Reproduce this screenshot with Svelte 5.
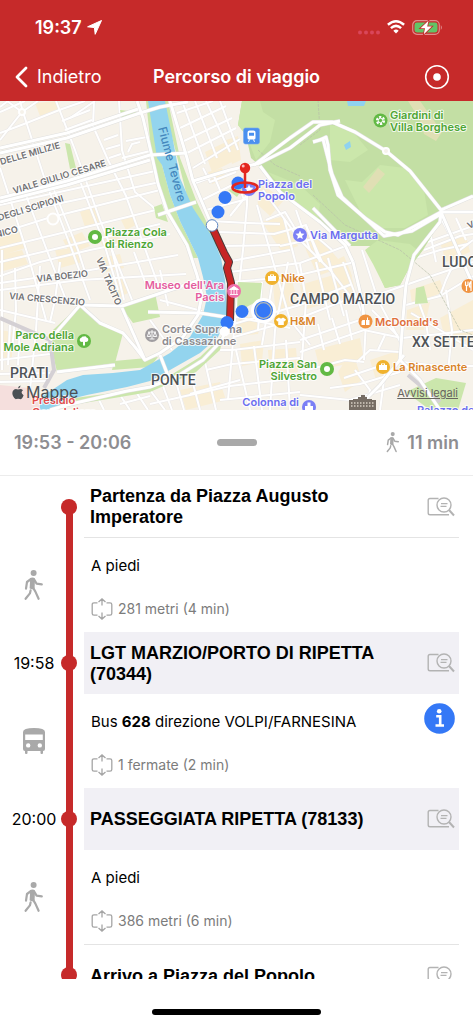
<script>
  const stops = [
    { kind: 'stop', name: 'Partenza da Piazza Augusto Imperatore', time: '', shaded: false },
    { kind: 'leg', mode: 'walk', detail: '281 metri (4 min)' },
    { kind: 'stop', name: 'LGT MARZIO/PORTO DI RIPETTA (70344)', time: '19:58', shaded: true },
    { kind: 'leg', mode: 'bus', line: '628', direction: 'VOLPI/FARNESINA', detail: '1 fermate (2 min)' },
    { kind: 'stop', name: 'PASSEGGIATA RIPETTA (78133)', time: '20:00', shaded: true },
    { kind: 'leg', mode: 'walk', detail: '386 metri (6 min)' },
    { kind: 'stop', name: 'Arrivo a Piazza del Popolo', time: '', shaded: false },
  ];

  // Small streets, drawn below parks and river
  const streets = [
    // Prati, west bank
    'M0 133L24 124L62 109L85 101', 'M0 112L25 101', 'M7 101L22 112L38 101', 'M22 112L0 140',
    'M20 101L23 112L45 180L72 250L90 300', 'M56 101L75 150L100 220L128 290L140 320',
    'M94 101L93 126L108 160L126 196L160 290', 'M119 101L122 150L135 192L152 206L160 215',
    'M0 168L12 205L30 262L46 320', 'M24 190L46 248L68 305', 'M52 185L78 250L86 275',
    'M78 176L104 243L118 290', 'M62 121L90 110', 'M65 130L92 120', 'M104 140L118 135', 'M106 149L120 145', 'M109 158L121 154',
    'M126 141L147 137', 'M128 152L132 144L140 142', 'M122 158L150 151',
    'M0 205L160 170', 'M0 216L160 182', 'M0 233L48 218L160 190', 'M0 248L160 209', 'M0 262L160 224', 'M8 101L0 107',
    'M0 276L40 262L90 250L170 234', 'M0 283L90 270L178 255', 'M0 290L80 280L186 274', 'M0 310L55 323',
    'M2 250L2 370', 'M15 268L16 310L12 350', 'M40 266L36 330L30 390', 'M60 262L55 300L50 322',
    'M95 101L70 118', 'M112 250L124 300', 'M134 252L148 290', 'M0 360L50 354', 'M0 374L52 373', 'M0 382L50 381',
    'M10 325L8 365', 'M20 326L18 365', 'M122 310L170 290L200 284', 'M160 270L168 306', 'M150 320L172 350', 'M160 300L202 311',
    // Tridente, east bank
    'M177 113L213 101', 'M180 128L226 106', 'M184 141L232 118', 'M187 153L236 128', 'M193 168L240 139', 'M182 101L205 164',
    'M195 101L217 158', 'M206 101L230 152', 'M220 101L238 150', 'M203 168L210 182L236 172', 'M196 183L214 176L220 190', 'M202 200L230 186L245 187',
    'M206 210L247 199', 'M210 221L248 223L280 224', 'M218 232L275 234', 'M222 246L280 245', 'M226 262L290 250',
    'M247 185L247 205L243 250L234 330L228 400', 'M257 205L272 258L290 320L310 345', 'M251 190L230 216', 'M236 178L244 200',
    'M263 190L300 240L330 270L353 300', 'M266 220L285 212L302 240', 'M274 234L306 225L320 262', 'M280 246L318 238L332 250',
    'M284 218L300 280', 'M296 210L310 250', 'M306 226L322 262',
    'M230 272L300 263L351 244', 'M232 282L290 277L355 262', 'M230 325L300 305L352 284', 'M232 316L290 328', 'M234 337L300 318L356 296',
    'M262 282L258 330', 'M272 285L262 345', 'M288 262L275 330L270 410', 'M300 264L306 300L302 360', 'M316 262L330 320', 'M328 258L344 316',
    'M343 262L364 318', 'M300 340L366 318', 'M300 352L364 330L402 338', 'M318 324L324 350', 'M332 318L340 344', 'M346 310L352 340',
    'M362 250L378 300L402 345', 'M374 296L420 280L473 262', 'M372 310L398 336', 'M406 305L440 296L473 276', 'M411 313L440 330L473 350',
    'M418 300L426 322L430 350', 'M446 290L452 330L448 372', 'M402 338L440 334L473 330', 'M402 362L440 366L473 366', 'M400 352L370 350L357 362',
    'M378 350L385 335', 'M355 370L370 390L366 410', 'M344 378L380 366', 'M330 388L360 384L400 372', 'M300 372L345 360L364 362', 'M300 395L350 400L400 385',
    'M366 320L364 360', 'M385 372L380 410', 'M440 296L446 280L460 250L473 240', 'M424 250L460 236L473 234', 'M430 232L436 262', 'M442 220L462 258', 'M428 242L473 226',
    'M456 218L466 240', 'M415 258L440 250L468 244',
    // Ponte
    'M150 390L165 410', 'M163 386L172 410', 'M176 382L184 410', 'M190 372L200 410', 'M205 362L216 410', 'M220 350L232 350L300 342',
    'M150 404L230 386L300 378', 'M206 370L232 364L300 358', 'M190 394L240 380', 'M220 400L300 392', 'M236 350L250 410', 'M254 346L262 410',
    'M286 340L290 410', 'M120 395L130 410', 'M136 392L148 410', 'M98 398L104 410', 'M120 404L150 396',
  ];

  const avenues = [
    'M0 153L67 138L140 113L160 107L188 102', 'M0 148L67 133L138 109',
    'M0 198L67 181L150 155L187 153', 'M0 202L67 185L150 160',
    'M137 101L143 118L153 161L158 184L167 211L187 245L197 275L202 295L198 315L183 337L160 353L145 360L135 347L123 333L100 323L80 305L60 328L50 340',
    'M170 101L178 128L187 158L193 181L210 221L225 258L232 280L230 317L222 340L203 360L176 377L150 387L127 391L67 405L50 410',
    'M193 181L230 170L260 163L290 148L320 125L340 121',
    'M254 165L290 138L313 122L332 122L355 132L386 151L410 171L441 210L473 196',
    'M260 166L280 192L320 222L345 245L353 262',
    'M320 140L326 137L328 145L330 170L338 195L365 218L385 232L398 235L415 226L441 212L473 212',
    'M313 142L323 139L332 174L342 197L384 236L412 231L441 214',
    'M441 212L440 222L414 255L406 285L403 318L400 360L420 380L440 410',
    'M353 262L362 300L364 318', 'M441 212L473 285', 'M122 308L145 360', 'M158 215L196 202',
    'M148 312L200 313L232 318', 'M57 372L115 365', 'M160 355L172 386', 'M80 305L122 306L200 280',
    'M404 355L380 385L355 410', 'M313 208L350 246',
  ];

  const blocks = [
    '35,103 58,101 60,108 40,116', '80,212 94,206 101,222 85,227', '63,240 82,232 90,246 70,254', '0,238 20,232 25,248 0,256',
    '0,255 22,250 28,264 0,272', '55,250 77,248 82,262 60,268', '100,240 117,232 122,244 104,250', '120,218 132,214 138,224 126,230',
    '205,152 228,141 236,160 212,172', '208,172 222,168 226,178 212,184', '226,140 238,136 241,160 232,164', '256,180 284,200 270,216 258,205',
    '262,222 284,216 298,246 282,252', '300,226 322,240 344,266 318,276 306,250', '238,318 262,316 258,334 236,336', '272,276 290,274 298,302 276,316',
    '300,285 350,270 356,294 304,310', '315,350 360,338 364,360 320,370', '328,264 344,256 352,276 334,284', '370,360 400,350 396,370 376,380',
    '407,310 430,302 424,330 406,330', '440,242 466,236 470,252 446,262', '410,290 440,280 444,292 412,304', '440,318 473,300 473,340 446,345',
    '180,390 220,382 226,400 186,410', '240,344 264,340 262,362 242,366', '268,350 296,348 298,372 270,376', '110,280 124,275 130,292 114,300',
    '0,330 12,332 12,360 0,360', '100,258 120,254 124,268 106,272', '352,350 362,380 345,392 338,372',
  ];
</script>

{#snippet walker(size)}
  <svg class="walker {size}" viewBox="0 0 20 31" aria-hidden="true">
    <circle cx="9.6" cy="3.1" r="3" />
    <path d="M6.2 8.2Q9 6.6 11 8.6L10.6 18.4Q8 20.4 5.6 18.2Z" />
    <path class="limb" d="M7 9L3 12L2 18.6M10.2 9.6L12.6 13.6L17.8 14.4M9 17.6L11.4 21.6L14.6 28.8M6.6 20.4L5.9 23.4L1.6 28.8" />
  </svg>
{/snippet}

<div class="app">
  <header>
    <div class="status">
      <span class="clock">19:37
        <svg width="15" height="15" viewBox="0 0 15 15" aria-hidden="true"><path d="M14.5.5L8.2 14.3L7.4 7.6L.6 6.8Z" fill="#fff" stroke="#fff" stroke-linejoin="round" /></svg>
      </span>
      <span class="signals">
        <svg width="22" height="5" viewBox="0 0 22 5" fill="#d9465a" aria-hidden="true">
          <circle cx="2" cy="2.5" r="2" /><circle cx="8" cy="2.5" r="2" /><circle cx="14" cy="2.5" r="2" /><circle cx="20" cy="2.5" r="2" />
        </svg>
        <svg width="18" height="14" viewBox="0 0 18 14" fill="none" stroke="#fff" stroke-width="2.5" aria-hidden="true">
          <path d="M.9 4.8Q9-2.2 17.1 4.8M3.9 8.1Q9 3.7 14.1 8.1" /><path d="M9 13.5L6.3 10.8Q9 8.4 11.7 10.8Z" fill="#fff" stroke="none" />
        </svg>
        <svg width="31" height="15" viewBox="0 0 31 15" aria-hidden="true">
          <rect x=".7" y=".7" width="26.6" height="13.6" rx="4.3" fill="none" stroke="#e08b8c" stroke-width="1.2" />
          <path d="M28.8 5Q31 7.5 28.8 10Z" fill="#e08b8c" />
          <rect x="2.5" y="2.5" width="23" height="10" rx="2.4" fill="#62c466" />
          <path d="M16.5 .8L8.5 8.3H13L11.8 14.2L19.8 6.5H15.2Z" fill="#fff" stroke="#c62828" stroke-width="1.6" paint-order="stroke" />
        </svg>
      </span>
    </div>
    <nav>
      <button class="back">
        <svg width="14" height="22" viewBox="0 0 14 22" aria-hidden="true"><path d="M12 2L3 11L12 20" fill="none" stroke="#fff" stroke-width="2.8" stroke-linecap="round" stroke-linejoin="round" /></svg>
        Indietro
      </button>
      <h1>Percorso di viaggio</h1>
      <button class="target" aria-label="Centra">
        <svg width="26" height="26" viewBox="0 0 26 26" aria-hidden="true"><circle cx="13" cy="13" r="11.3" fill="none" stroke="#fff" stroke-width="1.6" /><circle cx="13" cy="13" r="3.8" fill="#fff" /></svg>
      </button>
    </nav>
  </header>

  <div class="map">
    <svg class="canvas" viewBox="0 101 473 309" preserveAspectRatio="xMidYMid slice">
      <rect y="101" width="473" height="309" fill="#f6f2ea" />
      {#each blocks as b}
        <polygon points={b} fill="#f9eed5" />
      {/each}
      <path d="M0 385L28 388L50 410H0Z" fill="#f5dfdd" />
      <g class="street casing">{#each streets as d}<path {d} />{/each}</g>
      <g class="street">{#each streets as d}<path {d} />{/each}</g>

      <!-- parks -->
      <g fill="#cbe6ac">
        <path d="M80 305L100 323L123 333L115 363L57 372L52 350L53 330Z" />
        <path d="M122 308L155 293L160 317L133 323Z" />
        <path d="M112 370L114 361L158 357L150 367Z" />
        <path d="M238 282L262 283L260 300L237 312Z" />
        <path d="M406 392L436 378L466 383L458 410H430Z" />
        <path d="M65 143L70 144L76 168L70 169Z" /><path d="M120 110L138 112L122 118Z" /><path d="M154 207L162 204L168 222L156 218Z" />
        <path d="M146 101L152 101L162 165L170 195L180 221L198 258L192 258L165 208L152 158Z" />
        <path d="M163 101L168 101L180 158L196 200L220 250L216 246L190 208Z" />
        <path d="M150 388L200 357L222 336L228 318L220 350L196 372L150 392L60 407V400Z" />
        <path d="M228 190L244 186L237 197Z" />
        <path d="M416 288L424 286L428 303L415 304Z" />
      </g>
      <path d="M242 101L238 125L246 135L251 158L260 166L280 192L320 222L350 246L371 246L373 260L385 288L400 285L408 270L423 250L440 222L441 208L473 196V101Z" fill="#c3dfa4" />
      <g fill="#cbe7ab">
        <path d="M242 101H260L263 112L275 120L270 142L256 160L246 135L238 125Z" />
        <path d="M330 125L350 128L368 150L350 162L330 160Z" />
        <path d="M345 180L362 182L380 165L405 168L424 190L428 215L405 228L382 228L362 215Z" />
        <path d="M365 250L378 240L410 244L420 252L408 270L400 285L385 288L373 264Z" />
        <path d="M268 172L300 185L320 204L318 220L300 208Z" />
      </g>
      <path d="M363 187L378 168L385 174L369 193Z" fill="#e0dfb4" />
      <path d="M408 101H420L442 132L436 141L424 134L420 120Z" fill="#e0dfb4" />
      <path d="M347 101H366L364 106H348ZM344 145L350 141L351 147L346 150Z" fill="#8fd2f0" />
      <path d="M318 100L320 130L300 145M313 195L345 225L400 250L430 275L460 330L473 335M258 150L275 165L300 176" fill="none" stroke="#b8bfa9" stroke-width=".7" stroke-dasharray="3 1" />

      <!-- Tevere -->
      <path fill="#93d4ee" d="M148 101H165L172 135L180 178L193 208L213 238L221 258L225 280L227 317L218 337L200 353L170 370L150 381L127 387L87 395L67 400L57 410H40V398L67 380L83 375L113 373L140 370L170 353L190 337L203 315L207 297L203 277L198 258L180 221L170 195L162 165L157 158Z" />
      <path d="M0 318L50 340L54 370L44 388M408 375L440 402" fill="none" stroke="#d4d0d4" stroke-width="4" />
      <g class="avenue casing">{#each avenues as d}<path {d} />{/each}</g>
      <g class="avenue">{#each avenues as d}<path {d} />{/each}</g>
      <g fill="#f6f2ea" stroke="#fff" stroke-width="2"><circle cx="53" cy="219" r="5.5" /><circle cx="22" cy="112" r="3" /><circle cx="386" cy="151" r="3" /></g>

      <g class="road-name">
        <text x="1" y="165" transform="rotate(-16 1 165)">DELLE MILIZIE</text>
        <text x="14" y="194" transform="rotate(-17 14 194)">VIALE GIULIO CESARE</text>
        <text x="-1" y="221" transform="rotate(-17 -1 221)">DEGLI SCIPIONI</text>
        <text x="-9" y="239" transform="rotate(-14 -9 239)">ENICO</text>
        <text x="37" y="282" transform="rotate(-6 37 282)">VIA BOEZIO</text>
        <text x="9" y="299" transform="rotate(5 9 299)">VIA CRESCENZIO</text>
        <text x="96" y="259" transform="rotate(67 96 259)">VIA TACITO</text>
        <text x="469" y="229" transform="rotate(-25 469 229)">VIA</text>
      </g>
      <text class="river-name" x="158" y="128" transform="rotate(75 158 128)">Fiume Tevere</text>

      <g class="district">
        <text x="10" y="378">PRATI</text>
        <text x="151" y="385">PONTE</text>
        <text x="290" y="304">CAMPO MARZIO</text>
        <text x="442" y="267">LUDOVISI</text>
        <text x="412" y="347">XX SETTEMBRE</text>
      </g>

      <g class="poi green">
        <text x="390" y="119">Giardini di</text><text x="390" y="131">Villa Borghese</text>
        <text x="105" y="236">Piazza Cola</text><text x="105" y="248">di Rienzo</text>
        <text x="74" y="339" class="end">Parco della</text><text x="74" y="351" class="end">Mole Adriana</text>
        <text x="317" y="368" class="end">Piazza San</text><text x="317" y="380" class="end">Silvestro</text>
      </g>
      <g class="poi violet">
        <text x="258" y="188">Piazza del</text><text x="258" y="200">Popolo</text>
        <text x="310" y="239">Via Margutta</text>
        <text x="299" y="406" class="end">Colonna di</text>
        <text x="417" y="414">Palazzo del</text>
      </g>
      <g class="poi orange">
        <text x="281" y="282">Nike</text><text x="290" y="325">H&amp;M</text>
        <text x="393" y="371">La Rinascente</text>
      </g>
      <text class="poi red-orange" x="375" y="326">McDonald's</text>
      <g class="poi pink"><text x="224" y="289" class="end">Museo dell'Ara</text><text x="224" y="301" class="end">Pacis</text></g>
      <g class="poi gray"><text x="162" y="333">Corte Suprema</text><text x="162" y="345">di Cassazione</text></g>
      <g class="poi red"><text x="32" y="404">Presidio</text><text x="32" y="416">Ospedaliero</text></g>

      <!-- place markers -->
      <g fill="#62b944">
        <circle cx="380.500" cy="120.500" r="7" /><circle cx="95" cy="237" r="7" /><circle cx="84" cy="341" r="7" /><circle cx="327" cy="369" r="7" />
      </g>
      <g fill="#fff"><circle cx="95" cy="237" r="3" /><circle cx="327" cy="369" r="3" /><path d="M84 336.500Q86 335.800 86.500 337.500Q89 338 88 341Q86.500 342.500 85 341.800V345.500H83V341.800Q80 342.500 79.600 340Q79.600 338 81.600 337.500Q82 336 84 336.500Z" /></g>
      <circle cx="380.500" cy="120.500" r="3.600" fill="none" stroke="#fff" stroke-width="2" stroke-dasharray="2.300 1.460" /><circle cx="380.500" cy="120.500" r="2.200" fill="none" stroke="#fff" />
      <g fill="#7b7ff5"><circle cx="300" cy="235" r="7" /><circle cx="309" cy="407" r="7" /><circle cx="249" cy="189" r="7" /></g>
      <path id="star" d="M300 230.500L301.300 233.500L304.500 233.800L302.100 235.900L302.800 239L300 237.400L297.200 239L297.900 235.900L295.500 233.800L298.700 233.500Z" fill="#fff" />
      <use href="#star" x="-51" y="-46" />
      <path d="M307.500 402.500H310.500V406H313V410H305V406H307.500Z" fill="#fff" />
      <g fill="#f0b22e"><circle cx="272" cy="278" r="7" /><circle cx="281" cy="321" r="7" /><circle cx="383" cy="367" r="7" /></g>
      <g fill="#fff">
        <path id="bag" d="M268 276H276V281H268ZM270 276V274.500H274V276H273V275.300H271V276Z" /><use href="#bag" x="111" y="89" />
        <path d="M279 317.500Q281 319.500 283 317.500L286 319.500L284.800 321.500L283.800 321V325H278.200V321L277.200 321.500L276 319.500Z" />
      </g>
      <g fill="#f09442"><circle cx="365.500" cy="321.500" r="7" /><circle cx="468.500" cy="286" r="7" /></g>
      <path d="M361.500 325V321.500L362.500 320H365V325ZM366 325V320H367V317.500H368V320H369.500V325Z" fill="#fff" />
      <path d="M465.500 281.500V285L466.500 286V291M468 281.500V285L466.500 286M471 291V281.500Q469 283 469.500 287H471" fill="none" stroke="#fff" stroke-width="1.200" />
      <circle cx="152" cy="335" r="7" fill="#a09da0" />
      <path d="M152 330V339M148 332H156M149.500 339H154.500M149 332L147.300 336.500H150.700ZM155 332L153.300 336.500H156.700Z" fill="none" stroke="#fff" stroke-width=".9" />
      <rect x="243.500" y="128" width="16" height="16" rx="2" fill="#4a90ef" stroke="#77aaf0" stroke-width=".6" />
      <path fill-rule="evenodd" d="M249.500 130.500H253.500Q255.500 130.500 255.500 132.500V138Q255.500 139.500 254 139.500H249Q247.500 139.500 247.500 138V132.500Q247.500 130.500 249.500 130.500ZM249 132.800V135.800H254V132.800Z" fill="#fff" />
      <path d="M249.500 139.500L248.500 141.800M253.500 139.500L254.500 141.800" stroke="#fff" />
      <path d="M349 410V400H353V399H358V397H361V395H365V397H367V399H372V400H376V410Z" fill="#766d64" />
      <path d="M351 403H375M351 406H375" stroke="#d7cfc4" stroke-width="1.500" stroke-dasharray="1.500 1.500" />

      <!-- route -->
      <path class="route-shadow" d="M213 229L224 253L229 262L227 268L231 283L230 321" />
      <path class="route" d="M213 229L224 253L229 262L227 268L231 283L230 321" />
      <circle cx="234" cy="291" r="7" fill="#ee6fab" />
      <path d="M229.500 289.500L234 286.500L238.500 289.500ZM230 294.500H238" fill="#fff" stroke="#fff" stroke-width=".9" />
      <path d="M231.200 290V294M234 290V294M236.800 290V294" stroke="#fff" stroke-width=".9" />
      <g fill="#3478f6"><circle cx="238" cy="183" r="6.500" /><circle cx="225" cy="197.500" r="6.500" /><circle cx="218" cy="212" r="6.500" /><circle cx="242" cy="311.500" r="6.500" /><circle cx="227" cy="322.500" r="6.500" /></g>
      <circle cx="212" cy="225.500" r="5.800" fill="#fff" stroke="#5c87c5" />
      <circle cx="224.500" cy="331.500" r="5" fill="#fff" />
      <circle cx="263.500" cy="310.500" r="12.500" fill="#fff" /><circle cx="263.500" cy="310.500" r="9.500" fill="#3478f6" /><circle cx="263.500" cy="310.500" r="7.800" fill="none" stroke="#b6b9b2" stroke-width="1.200" />
      <ellipse cx="245" cy="187.500" rx="12.500" ry="5" fill="none" stroke="#e3261e" stroke-width="2.600" />
      <path d="M245 170V188" stroke="#e3261e" stroke-width="2.500" /><circle cx="245" cy="168" r="5.200" fill="#e3261e" /><circle cx="243.200" cy="166" r="1.500" fill="#fbb" />
    </svg>
    <span class="brand">
      <svg width="12" height="15" viewBox="0 0 12 15" aria-hidden="true"><path d="M8.600 .6Q8.500 3 6 3.600Q6.100 1.200 8.600 .6ZM6 4.600Q9 3 11 5.300Q7.900 7.500 11.600 10.200Q10 14.600 7.900 14.100Q6 13.200 4.300 14.100Q2.600 14.600 1 11Q-.8 6.400 2.200 4.400Q4 3.500 6 4.600Z" fill="#4b5054" /></svg>Mappe
    </span>
    <a class="legal" href="#avvisi">Avvisi legali</a>
  </div>

  <section class="summary">
    <span>19:53 - 20:06</span>
    <span class="grabber"></span>
    <span class="walk-total">{@render walker('small')}11 min</span>
  </section>

  <ol class="timeline">
    {#each stops as item, i}
      <li class={item.kind}>
        <div class="side">
          {#if item.time}
            {item.time}
          {:else if item.mode === 'walk'}
            {@render walker('big')}
          {:else if item.mode === 'bus'}
            <svg width="24" height="28" viewBox="0 0 24 28" fill="#a9a9a9" aria-hidden="true">
              <path fill-rule="evenodd" d="M1 5Q1 1 12 1Q23 1 23 5V22Q23 24 21 24V26Q21 27 20 27H19.500Q18.500 27 18.500 26V24H5.500V26Q5.500 27 4.500 27H4Q3 27 3 26V24Q1 24 1 22ZM3.200 7.400V13H20.800V7.400ZM6.200 16.200A2.200 2.200 0 1 0 6.200 20.600A2.200 2.200 0 1 0 6.200 16.200ZM17.800 16.200A2.200 2.200 0 1 0 17.800 20.600A2.200 2.200 0 1 0 17.800 16.200Z" />
            </svg>
          {/if}
        </div>
        <div class="rail">
          <span class="track" class:hidden={i === 0}></span>
          {#if item.kind === 'stop'}
            <span class="dot"></span>
            <span class="track" class:hidden={i === stops.length - 1}></span>
          {/if}
        </div>
        {#if item.kind === 'stop'}
          <div class="card" class:shaded={item.shaded} class:arrival={i === stops.length - 1}>
            <h2>{item.name}</h2>
            <button aria-label="Mostra sulla mappa">
              <svg width="28" height="20" viewBox="0 0 28 20" fill="none" stroke="#b3b3b3" stroke-width="1.400" aria-hidden="true">
                <path d="M11.500 1.500H3Q1.200 1.500 1.200 3.300V16Q1.200 17.800 3 17.800H22" />
                <circle cx="17" cy="8" r="7" /><path d="M14 6.600H20.500M13.500 9.400H19.500" /><path d="M22 13L27 18.500" stroke-width="2" />
              </svg>
            </button>
          </div>
        {:else}
          <div class="card">
            <div class="info">
              <p>{#if item.mode === 'bus'}Bus <b>{item.line}</b> direzione {item.direction}{:else}A piedi{/if}</p>
              <p class="detail">
                <svg width="22" height="22" viewBox="0 0 22 22" fill="none" stroke="#a5a5a5" stroke-width="1.300" aria-hidden="true">
                  <path d="M6.500 4.800H3Q1.200 4.800 1.200 6.600V15.400Q1.200 17.200 3 17.200H6.500M15.500 4.800H19Q20.800 4.800 20.800 6.600V15.400Q20.800 17.200 19 17.200H15.500M11 7.500V1M7.500 4L11 .9L14.500 4M11 14.500V21M7.500 18L11 21.100L14.500 18" />
                </svg>
                {item.detail}
              </p>
            </div>
            {#if item.mode === 'bus'}
              <button class="more" aria-label="Informazioni">
                <svg width="31" height="31" viewBox="0 0 31 31" aria-hidden="true"><circle cx="15.500" cy="15.500" r="15.300" fill="#3478f6" /><circle cx="15.200" cy="8.200" r="2.300" fill="#fff" /><path d="M12.200 13.300H16.200V22M11.500 22.500H20" fill="none" stroke="#fff" stroke-width="2.600" /></svg>
              </button>
            {/if}
          </div>
        {/if}
      </li>
    {/each}
  </ol>

  <footer><span></span></footer>
</div>

<style>
  :global(body) {
    margin: 0;
    background: #fff;
  }

  * {
    box-sizing: border-box;
  }

  .app {
    display: flex;
    flex-direction: column;
    height: 100vh;
    font-family: Inter, "Liberation Sans", sans-serif;
    color: #000;
  }

  svg {
    display: block;
    flex-shrink: 0;
  }

  button {
    padding: 0;
    border: none;
    background: none;
    font: inherit;
    color: inherit;
    cursor: pointer;
  }

  header {
    flex-shrink: 0;
    background: #c62a2a;
    color: #fff;
  }

  .status {
    display: flex;
    justify-content: space-between;
    align-items: center;
    height: 54px;
    padding: 0 30px 0 35px;
  }

  .clock {
    display: flex;
    align-items: center;
    gap: 5px;
    font-size: 18px;
    font-weight: 600;
  }

  .signals {
    display: flex;
    align-items: center;
    gap: 7px;
  }

  .signals svg:first-child {
    align-self: flex-end;
  }

  nav {
    display: grid;
    grid-template-columns: 1fr auto 1fr;
    align-items: center;
    height: 47px;
    padding: 0 14px 2px;
  }

  .back {
    display: flex;
    align-items: center;
    justify-self: start;
    gap: 9px;
    font-size: 18px;
  }

  h1 {
    margin: 0;
    font-size: 18px;
    font-weight: 600;
  }

  .target {
    justify-self: end;
    padding-right: 9px;
  }

  .map {
    position: relative;
    flex-shrink: 0;
    height: 309px;
    overflow: hidden;
  }

  .canvas {
    width: 100%;
    height: 100%;
  }

  .street {
    fill: none;
    stroke: #fff;
    stroke-width: 2;
  }

  .avenue {
    fill: none;
    stroke: #fff;
    stroke-width: 3;
    stroke-linejoin: round;
  }

  .street.casing {
    stroke: #e9e7e7;
    stroke-width: 3;
  }

  .avenue.casing {
    stroke: #e0e0df;
    stroke-width: 4;
  }

  .canvas text {
    paint-order: stroke;
    stroke: rgba(255, 255, 255, 0.8);
    stroke-width: 2px;
    stroke-linejoin: round;
  }

  .road-name {
    font-size: 9px;
    font-weight: 600;
    fill: #707073;
  }

  .canvas .river-name {
    font-size: 12px;
    font-weight: 500;
    fill: #4387bd;
    stroke: none;
  }

  .district {
    font-family: "Liberation Sans Narrow", Roboto, sans-serif;
    font-size: 14px;
    font-weight: 500;
    fill: #4f5357;
  }

  .poi {
    font-size: 11px;
    font-weight: 600;
  }

  .end {
    text-anchor: end;
  }

  .green { fill: #4da534; }
  .violet { fill: #6b6ef0; }
  .orange { fill: #d98328; }
  .red-orange { fill: #e0703c; }
  .pink { fill: #e55c9e; }
  .gray { fill: #8d8b8e; }
  .red { fill: #e34c4c; }

  .route-shadow,
  .route {
    fill: none;
    stroke: #4a3b3b;
    stroke-width: 8;
    stroke-linejoin: round;
  }

  .route {
    stroke: #c62525;
    stroke-width: 6;
  }

  .brand {
    position: absolute;
    left: 12px;
    bottom: 8px;
    display: flex;
    align-items: center;
    gap: 2px;
    font-size: 16px;
    line-height: 20px;
    color: #4b5054;
  }

  .legal {
    position: absolute;
    right: 15px;
    bottom: 10px;
    font-size: 11px;
    line-height: 14px;
    color: #68645e;
  }

  .summary {
    display: grid;
    grid-template-columns: 1fr auto 1fr;
    align-items: center;
    flex-shrink: 0;
    height: 66px;
    padding: 0 14px;
    border-bottom: 1px solid #ececec;
    font-size: 18px;
    font-weight: 600;
    color: #8e8e92;
  }

  .grabber {
    width: 40px;
    height: 7px;
    border-radius: 4px;
    background: #a9a9a9;
  }

  .walk-total {
    display: flex;
    align-items: center;
    justify-self: end;
    gap: 7px;
  }

  .walker {
    width: 20px;
    height: 31px;
    fill: #a9a9a9;
  }

  .walker.small {
    width: 14px;
    height: 21px;
  }

  .limb {
    fill: none;
    stroke: #a9a9a9;
    stroke-width: 2.2;
    stroke-linecap: round;
    stroke-linejoin: round;
  }

  .timeline {
    flex: 1;
    min-height: 0;
    margin: 0;
    padding: 0 14px 0 0;
    overflow-y: auto;
    scrollbar-width: none;
    list-style: none;
  }

  li {
    display: grid;
    grid-template-columns: 57px 24px 1fr;
    min-height: 94px;
  }

  .stop {
    min-height: 62px;
  }

  .side {
    display: flex;
    align-items: center;
    justify-content: center;
    padding-left: 11px;
    font-size: 16px;
  }

  .rail {
    display: flex;
    flex-direction: column;
    align-items: center;
  }

  .track {
    flex: 1;
    width: 7px;
    background: #c62a2a;
  }

  .track.hidden {
    visibility: hidden;
  }

  .dot {
    width: 16px;
    height: 16px;
    margin: -1px 0;
    border-radius: 50%;
    background: #c62a2a;
  }

  .card {
    display: flex;
    justify-content: space-between;
    margin-left: 3px;
    padding: 0 4px 0 6px;
  }

  .stop .card {
    align-items: center;
  }

  .stop:first-child .card {
    border-bottom: 1px solid #e4e4e4;
  }

  .arrival {
    border-top: 1px solid #e4e4e4;
  }

  .shaded {
    background: #f1f0f5;
  }

  h2 {
    max-width: 300px;
    margin: 0;
    padding-top: 1px;
    font-family: "Liberation Sans", sans-serif;
    font-size: 18px;
    line-height: 21px;
    font-weight: 700;
  }

  .info {
    display: flex;
    flex-direction: column;
    gap: 21px;
    padding: 17px 0 12px 1px;
  }

  p {
    margin: 0;
    font-size: 15px;
    line-height: 22px;
  }

  .detail {
    display: flex;
    align-items: center;
    gap: 5px;
    font-size: 14px;
    color: #7c7c7c;
  }

  .more {
    align-self: flex-start;
    margin-top: 9px;
  }

  footer {
    display: flex;
    justify-content: center;
    flex-shrink: 0;
    height: 45px;
    padding-top: 30px;
  }

  footer span {
    width: 169px;
    height: 6px;
    border-radius: 3px;
    background: #000;
  }
</style>
